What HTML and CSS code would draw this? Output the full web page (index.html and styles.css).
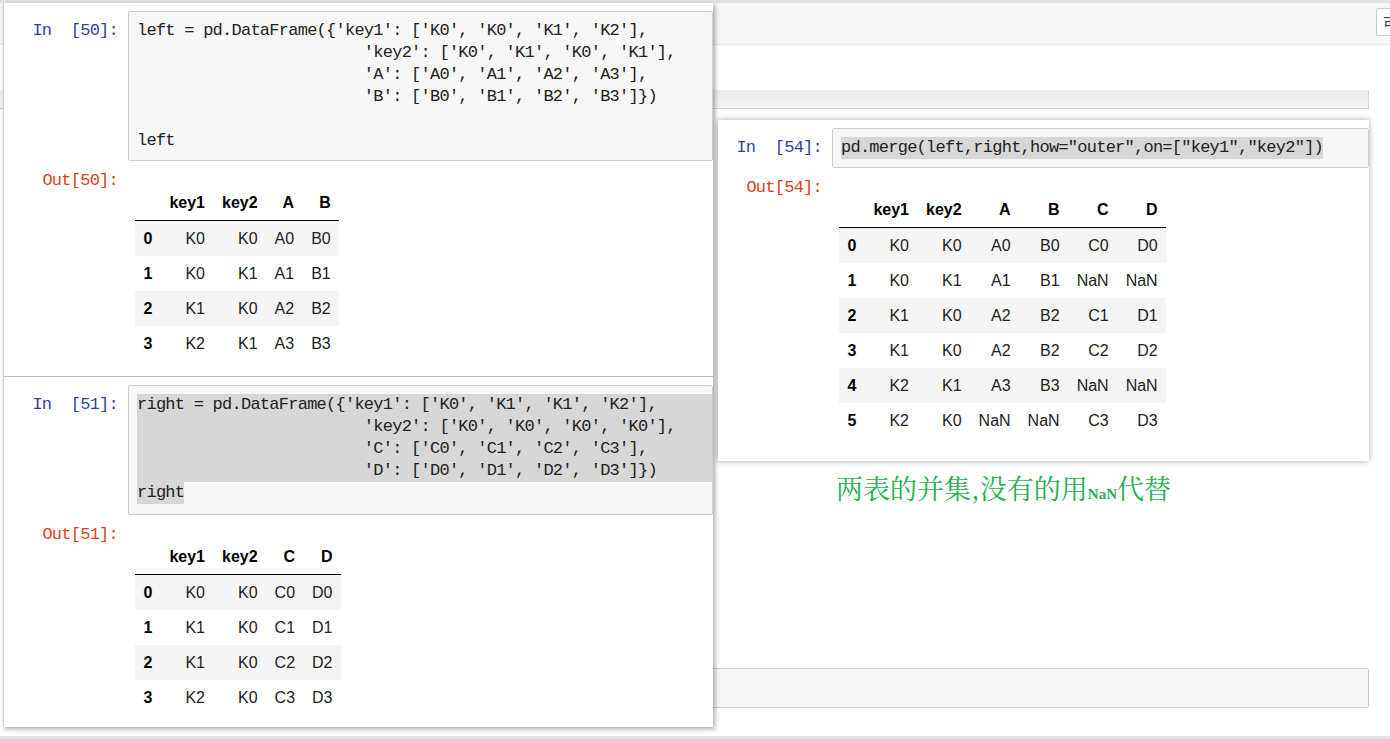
FILE: index.html
```html
<!DOCTYPE html>
<html lang="zh">
<head>
<meta charset="utf-8">
<title>pd.merge outer</title>
<link rel="stylesheet" href="styles.css">
</head>
<body>
<div class="notebook">
  <div class="topline"></div>
  <div class="toolbar"><span class="trust">可信</span></div>
  <div class="menu-space"></div>
  <div class="cell-tail"></div>
  <div class="nb-space"></div>
  <div class="empty-cell"></div>
  <div class="nb-foot"></div>
</div>

<section class="shot shot-left">
  <div class="cell cell-first">
    <div class="input">
      <div class="prompt prompt-in">In [50]:</div>
      <pre class="code">left = pd.DataFrame({'key1': ['K0', 'K0', 'K1', 'K2'],
                        'key2': ['K0', 'K1', 'K0', 'K1'],
                        'A': ['A0', 'A1', 'A2', 'A3'],
                        'B': ['B0', 'B1', 'B2', 'B3']})

left</pre>
    </div>
    <div class="output">
      <div class="prompt prompt-out">Out[50]:</div>
      <table class="df">
        <thead><tr><th></th><th>key1</th><th>key2</th><th>A</th><th>B</th></tr></thead>
        <tbody>
          <tr><th>0</th><td>K0</td><td>K0</td><td>A0</td><td>B0</td></tr>
          <tr><th>1</th><td>K0</td><td>K1</td><td>A1</td><td>B1</td></tr>
          <tr><th>2</th><td>K1</td><td>K0</td><td>A2</td><td>B2</td></tr>
          <tr><th>3</th><td>K2</td><td>K1</td><td>A3</td><td>B3</td></tr>
        </tbody>
      </table>
    </div>
  </div>
  <div class="cell cell-second">
    <div class="input">
      <div class="prompt prompt-in">In [51]:</div>
      <pre class="code code-tall"><span class="sel-block">right = pd.DataFrame({'key1': ['K0', 'K1', 'K1', 'K2'],
                        'key2': ['K0', 'K0', 'K0', 'K0'],
                        'C': ['C0', 'C1', 'C2', 'C3'],
                        'D': ['D0', 'D1', 'D2', 'D3']})</span><span class="sel">right</span></pre>
    </div>
    <div class="output">
      <div class="prompt prompt-out">Out[51]:</div>
      <table class="df">
        <thead><tr><th></th><th>key1</th><th>key2</th><th>C</th><th>D</th></tr></thead>
        <tbody>
          <tr><th>0</th><td>K0</td><td>K0</td><td>C0</td><td>D0</td></tr>
          <tr><th>1</th><td>K1</td><td>K0</td><td>C1</td><td>D1</td></tr>
          <tr><th>2</th><td>K1</td><td>K0</td><td>C2</td><td>D2</td></tr>
          <tr><th>3</th><td>K2</td><td>K0</td><td>C3</td><td>D3</td></tr>
        </tbody>
      </table>
    </div>
  </div>
</section>

<section class="shot shot-right">
  <div class="cell">
    <div class="input">
      <div class="prompt prompt-in">In [54]:</div>
      <pre class="code"><span class="sel">pd.merge(left,right,how="outer",on=["key1","key2"])</span></pre>
    </div>
    <div class="output">
      <div class="prompt prompt-out">Out[54]:</div>
      <table class="df">
        <thead><tr><th></th><th>key1</th><th>key2</th><th>A</th><th>B</th><th>C</th><th>D</th></tr></thead>
        <tbody>
          <tr><th>0</th><td>K0</td><td>K0</td><td>A0</td><td>B0</td><td>C0</td><td>D0</td></tr>
          <tr><th>1</th><td>K0</td><td>K1</td><td>A1</td><td>B1</td><td>NaN</td><td>NaN</td></tr>
          <tr><th>2</th><td>K1</td><td>K0</td><td>A2</td><td>B2</td><td>C1</td><td>D1</td></tr>
          <tr><th>3</th><td>K1</td><td>K0</td><td>A2</td><td>B2</td><td>C2</td><td>D2</td></tr>
          <tr><th>4</th><td>K2</td><td>K1</td><td>A3</td><td>B3</td><td>NaN</td><td>NaN</td></tr>
          <tr><th>5</th><td>K2</td><td>K0</td><td>NaN</td><td>NaN</td><td>C3</td><td>D3</td></tr>
        </tbody>
      </table>
    </div>
  </div>
</section>

<p class="note">两表的并集,没有的用<span class="nan">NaN</span>代替</p>
</body>
</html>
```

FILE: styles.css
```css
html, body {
  margin: 0;
  padding: 0;
}

body {
  width: 1390px;
  height: 739px;
  overflow: hidden;
  position: relative;
  background: #fff;
  font-family: "Liberation Sans", Arial, sans-serif;
}

/* ---------- background notebook page ---------- */
.notebook {
  display: flex;
  flex-direction: column;
  height: 739px;
}

.topline {
  flex: none;
  height: 3px;
  background: #e3e3e3;
}

.toolbar {
  flex: none;
  height: 41px;
  background: #f7f7f7;
  border-bottom: 1px solid #e5e5e5;
  display: flex;
  justify-content: flex-end;
  align-items: flex-start;
  overflow: hidden;
}

.trust {
  margin-top: 5px;
  margin-right: -28px;
  height: 26px;
  padding: 0 6px;
  border: 1px solid #cccccc;
  border-radius: 2px;
  background: #fff;
  font: 14px/26px "Noto Sans CJK SC", sans-serif;
  color: #333;
  white-space: nowrap;
}

.menu-space {
  flex: none;
  height: 45px;
}

.cell-tail {
  flex: none;
  height: 18px;
  margin-right: 21px;
  background: linear-gradient(#ececec, #f5f5f5);
  border-bottom: 1px solid #d4d4d4;
  border-right: 1px solid #d4d4d4;
}

.nb-space {
  flex: 1;
}

.empty-cell {
  flex: none;
  height: 38px;
  margin: 0 21px 28px 10px;
  background: #f7f7f7;
  border: 1px solid #cfcfcf;
  border-radius: 2px;
}

.nb-foot {
  flex: none;
  height: 3px;
  background: #e2e2e2;
}

/* ---------- pasted screenshots (overlays) ---------- */
.shot {
  position: absolute;
  background: #fff;
  overflow: hidden;
}

.shot-left {
  left: 3px;
  top: 3px;
  width: 709px;
  height: 724px;
  border-left: 1px solid #d0d0d0;
  box-shadow: 2px 2px 5px rgba(0, 0, 0, 0.35);
  display: flex;
  flex-direction: column;
}

.shot-right {
  left: 718px;
  top: 120px;
  width: 651px;
  height: 341px;
  box-shadow: 0 0 6px rgba(0, 0, 0, 0.35);
}

.cell {
  display: flex;
  flex-direction: column;
  gap: 7px;
  padding-top: 8px;
}

.cell-first {
  padding-bottom: 15px;
}

.cell-second {
  border-top: 1px solid #bdbdbd;
}

.input,
.output {
  display: flex;
  align-items: flex-start;
  gap: 10px;
}

.prompt {
  flex: none;
  width: 114px;
  text-align: right;
  font: 17px/22px "Liberation Mono", monospace;
  letter-spacing: -0.75px;
  white-space: pre;
}

.shot-right .prompt {
  width: 104px;
}

.prompt-in {
  color: #303f9f;
  padding-top: 9px;
  word-spacing: 10px;
}

.prompt-out {
  color: #d84315;
  padding-top: 2px;
}

.code {
  flex: 1;
  min-width: 0;
  margin: 0;
  padding: 8px;
  background: #f7f7f7;
  border: 1px solid #cfcfcf;
  border-radius: 2px;
  font: 17px/22px "Liberation Mono", monospace;
  letter-spacing: -0.75px;
  color: #222;
  white-space: pre;
  overflow: hidden;
}

.code-tall {
  padding-bottom: 10px;
}

.sel-block {
  display: block;
  background: #d7d7d7;
  margin-right: -8px;
}

.sel {
  display: inline-block;
  background: #d7d7d7;
}

/* ---------- dataframe tables ---------- */
.df {
  margin-top: 17px;
  margin-left: 7px;
  border-collapse: collapse;
  border-spacing: 0;
  font-family: "Liberation Sans", Arial, sans-serif;
  font-size: 16px;
  color: #000;
}

.df th,
.df td {
  height: 35px;
  padding: 0 8.5px;
  line-height: 35px;
  text-align: right;
  vertical-align: middle;
  white-space: nowrap;
}

.df th {
  font-weight: bold;
}

.df td {
  color: #222;
}

.df thead th {
  border-bottom: 1px solid #000;
}

.df tbody tr:nth-child(odd) {
  background: #f5f5f5;
}

/* ---------- handwritten annotation ---------- */
.note {
  position: absolute;
  left: 836px;
  top: 474px;
  margin: 0;
  font: 27px/27px "Noto Serif CJK SC", "Noto Sans CJK SC", sans-serif;
  color: #22b14c;
  white-space: nowrap;
}

.nan {
  font: bold 15px "Liberation Serif", serif;
}
```
